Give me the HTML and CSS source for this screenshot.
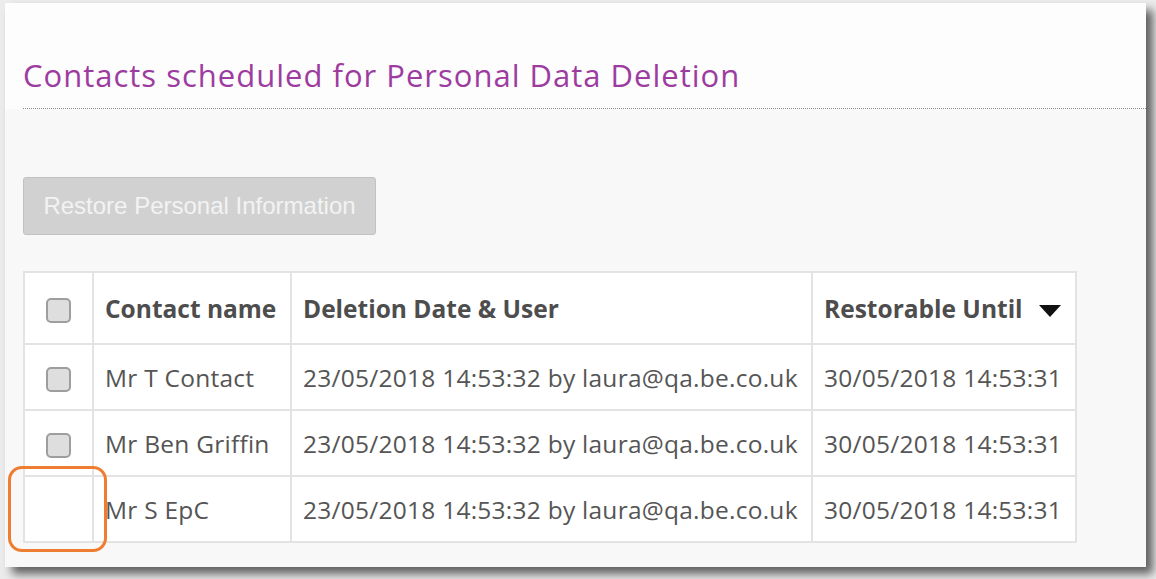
FILE: index.html
```html
<!DOCTYPE html>
<html>
<head>
<meta charset="utf-8">
<link rel="stylesheet" href="styles.css">
</head>
<body>
<div class="panel">
  <div class="head">
    <h1 class="title">Contacts scheduled for Personal Data Deletion</h1>
  </div>
  <div class="content">
    <button class="btn" disabled>Restore Personal Information</button>
    <table class="grid">
      <colgroup>
        <col class="c1"><col class="c2"><col class="c3"><col class="c4">
      </colgroup>
      <thead>
        <tr>
          <th class="chk"><span class="box"></span></th>
          <th>Contact name</th>
          <th>Deletion Date &amp; User</th>
          <th>Restorable Until <span class="sort"></span></th>
        </tr>
      </thead>
      <tbody>
        <tr>
          <td class="chk"><span class="box"></span></td>
          <td>Mr T Contact</td>
          <td>23/05/2018 14:53:32 by laura@qa.be.co.uk</td>
          <td>30/05/2018 14:53:31</td>
        </tr>
        <tr>
          <td class="chk"><span class="box"></span></td>
          <td>Mr Ben Griffin</td>
          <td>23/05/2018 14:53:32 by laura@qa.be.co.uk</td>
          <td>30/05/2018 14:53:31</td>
        </tr>
        <tr>
          <td class="chk"></td>
          <td>Mr S EpC</td>
          <td>23/05/2018 14:53:32 by laura@qa.be.co.uk</td>
          <td>30/05/2018 14:53:31</td>
        </tr>
      </tbody>
    </table>
  </div>
  <div class="highlight"></div>
</div>
</body>
</html>
```

FILE: styles.css
```css
html, body {
  margin: 0;
  padding: 0;
}
body {
  background: #ececec;
  width: 1156px;
  height: 579px;
  overflow: hidden;
  font-family: "Open Sans", "Noto Sans", sans-serif;
}
.panel {
  position: relative;
  margin: 3px 0 0 5px;
  width: 1141px;
  height: 564px;
  background: #f8f8f8;
  box-shadow: 7px 7px 9px rgba(0, 0, 0, 0.6);
}
.head {
  background: #fdfdfd;
  padding: 52px 0 0 18px;
}
.title {
  margin: 0;
  font-weight: normal;
  font-size: 31px;
  letter-spacing: 1px;
  line-height: 40px;
  color: #9d3ca0;
  padding-bottom: 13px;
  border-bottom: 1px dotted #8e8e8e;
}
.content {
  padding: 68px 0 0 18px;
}
.btn {
  display: block;
  box-sizing: border-box;
  height: 58px;
  width: 353px;
  padding: 0;
  margin: 0;
  background: #d1d1d1;
  border: 1px solid #c2c2c2;
  border-radius: 3px;
  color: #f3f3f3;
  font-family: "Liberation Sans", Arial, sans-serif;
  font-size: 24px;
}
.grid {
  margin-top: 36px;
  border-collapse: collapse;
  table-layout: fixed;
  width: 1052px;
  background: #fff;
}
.c1 { width: 69px; }
.c2 { width: 198px; }
.c3 { width: 521px; }
.c4 { width: 264px; }
.grid th, .grid td {
  border: 2px solid #e3e3e3;
  padding: 0 0 0 11px;
  text-align: left;
  font-size: 24.5px;
  letter-spacing: 0.25px;
  color: #555;
  white-space: nowrap;
  overflow: hidden;
}
.grid th {
  height: 70px;
  font-weight: bold;
  letter-spacing: 0;
  color: #4d4d4d;
}
.grid td {
  height: 64px;
}
.grid .chk {
  padding: 0;
  text-align: center;
}
.box {
  display: inline-block;
  box-sizing: border-box;
  width: 25px;
  height: 25px;
  vertical-align: middle;
  background: #dedede;
  border: 2px solid #9e9e9e;
  border-radius: 5px;
}
.sort {
  display: inline-block;
  width: 0;
  height: 0;
  margin-left: 10px;
  vertical-align: middle;
  border-left: 11px solid transparent;
  border-right: 11px solid transparent;
  border-top: 12px solid #111;
}
.highlight {
  position: absolute;
  left: 3px;
  top: 463px;
  width: 99px;
  height: 86px;
  box-sizing: border-box;
  border: 3px solid #ee7d31;
  border-radius: 14px;
}
```
